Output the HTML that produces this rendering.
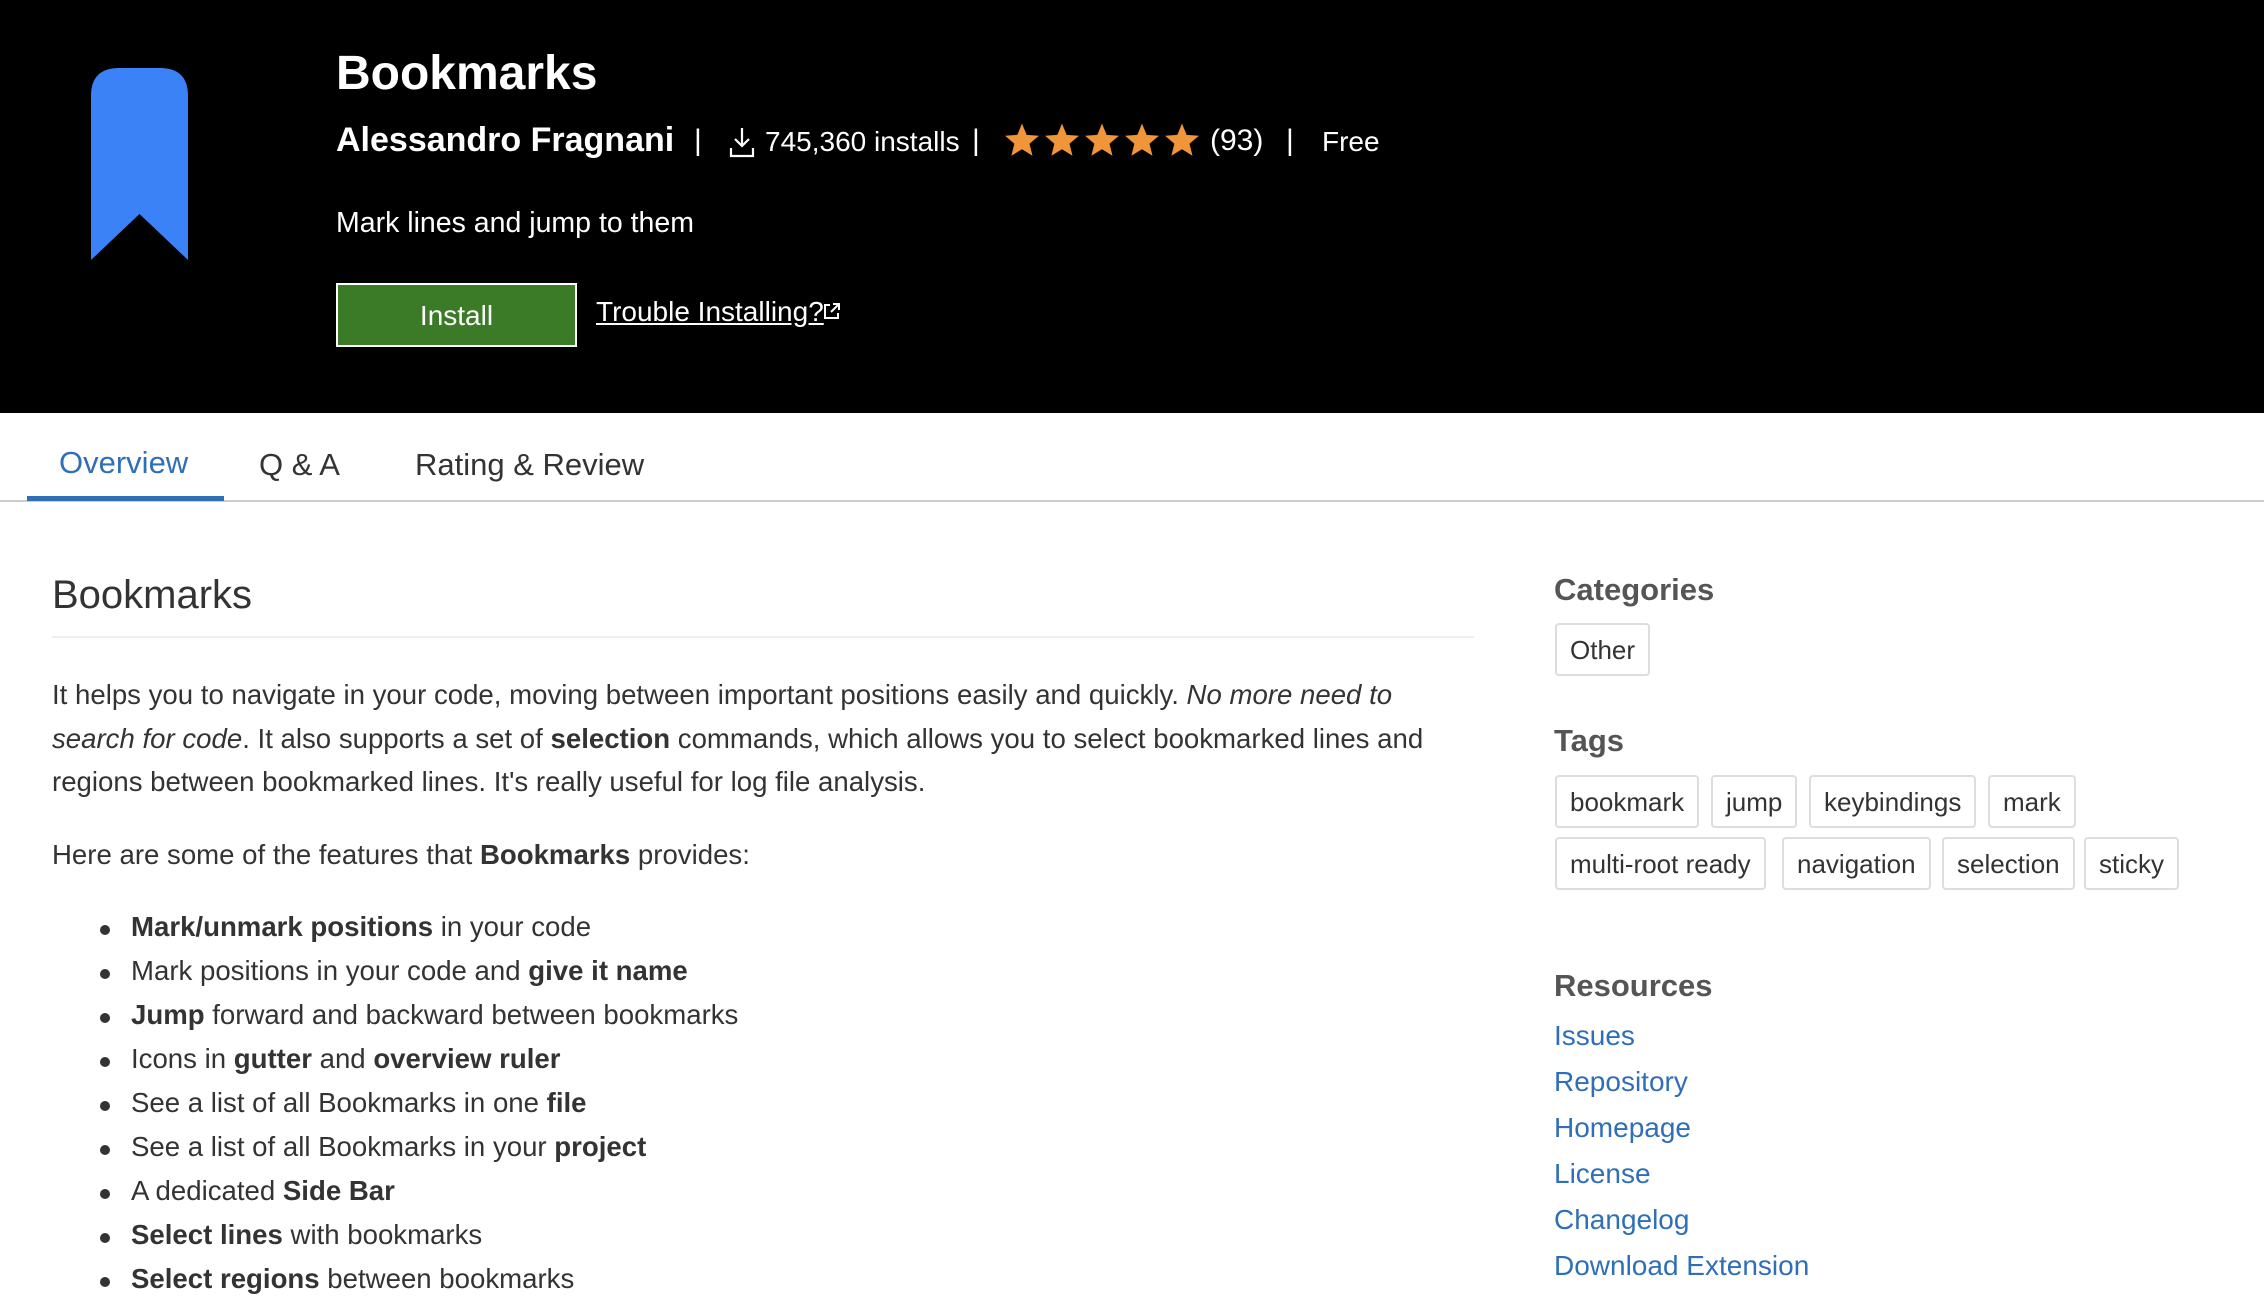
<!DOCTYPE html>
<html><head><meta charset="utf-8"><style>
*{margin:0;padding:0;box-sizing:border-box}
body{width:2264px;height:1313px;overflow:hidden;background:#fff;font-family:"Liberation Sans",sans-serif;position:relative;color:#333}
.a{position:absolute;white-space:nowrap}
#hdr{position:absolute;left:0;top:0;width:2264px;height:413px;background:#000;color:#fff}
.star{display:inline-block;width:36px;height:36px;vertical-align:-5px;margin-right:4px}
.tag{position:absolute;height:53px;border:2px solid #ddd;border-radius:4px;font-size:26px;line-height:51px;padding:0 13px;color:#333;white-space:nowrap}
.lk{position:absolute;left:1554px;font-size:28px;color:#2f6fb8;white-space:nowrap}
.p{position:absolute;left:52px;font-size:27.6px;color:#333;white-space:nowrap}
.li{position:absolute;left:131px;font-size:27.6px;color:#333;white-space:nowrap}
.li::before{content:"";position:absolute;left:-31px;top:14px;width:10px;height:10px;border-radius:50%;background:#333}
b{font-weight:bold}
</style></head><body>
<div id="hdr">
<svg class="a" style="left:91px;top:68px" width="97" height="192" viewBox="0 0 97 192"><path d="M0 28 Q0 0 28 0 L69 0 Q97 0 97 28 L97 192 L48.5 146 L0 192 Z" fill="#3b82f6"/></svg>
<div class="a" style="left:336px;top:46px;font-size:48px;font-weight:bold">Bookmarks</div>
<div class="a" style="left:336px;top:121px;font-size:34px;font-weight:bold">Alessandro Fragnani</div>
<div class="a" style="left:694px;top:124px;font-size:30px">|</div>
<svg class="a" style="left:728px;top:126px" width="28" height="32" viewBox="0 0 28 32"><path d="M14 2 V20 M7 13 L14 20 L21 13 M3 22 V30 H25 V22" stroke="#fff" stroke-width="2.2" fill="none"/></svg>
<div class="a" style="left:765px;top:126px;font-size:28px">745,360 installs</div>
<div class="a" style="left:972px;top:124px;font-size:30px">|</div>
<div class="a" style="left:1004px;top:122px">
<svg class="star" viewBox="0 0 24 24"><path d="M12 1l3.1 7.6 8.2.6-6.3 5.3 2 8L12 18.2 4.9 22.5l2-8L.7 9.2l8.2-.6z" fill="#f0953a"/></svg><svg class="star" viewBox="0 0 24 24"><path d="M12 1l3.1 7.6 8.2.6-6.3 5.3 2 8L12 18.2 4.9 22.5l2-8L.7 9.2l8.2-.6z" fill="#f0953a"/></svg><svg class="star" viewBox="0 0 24 24"><path d="M12 1l3.1 7.6 8.2.6-6.3 5.3 2 8L12 18.2 4.9 22.5l2-8L.7 9.2l8.2-.6z" fill="#f0953a"/></svg><svg class="star" viewBox="0 0 24 24"><path d="M12 1l3.1 7.6 8.2.6-6.3 5.3 2 8L12 18.2 4.9 22.5l2-8L.7 9.2l8.2-.6z" fill="#f0953a"/></svg><svg class="star" viewBox="0 0 24 24"><path d="M12 1l3.1 7.6 8.2.6-6.3 5.3 2 8L12 18.2 4.9 22.5l2-8L.7 9.2l8.2-.6z" fill="#f0953a"/></svg>
</div>
<div class="a" style="left:1210px;top:124px;font-size:30px">(93)</div>
<div class="a" style="left:1286px;top:124px;font-size:30px">|</div>
<div class="a" style="left:1322px;top:126px;font-size:28px">Free</div>
<div class="a" style="left:336px;top:207px;font-size:28.5px">Mark lines and jump to them</div>
<div class="a" style="left:336px;top:283px;width:241px;height:64px;background:#3b7b27;border:2px solid #fff;color:#fff;font-size:28px;text-align:center;line-height:62px">Install</div>
<div class="a" style="left:596px;top:296px;font-size:28px;text-decoration:underline">Trouble Installing?</div>
<svg class="a" style="left:823px;top:302px" width="18" height="18" viewBox="0 0 18 18"><path d="M7 3H2V16H15V11 M10 2H16V8 M16 2L8 10" stroke="#fff" stroke-width="2" fill="none"/></svg>
</div>
<div class="a" style="left:59px;top:445px;font-size:31px;color:#2f6fb8">Overview</div>
<div class="a" style="left:259px;top:447px;font-size:31px;color:#333">Q &amp; A</div>
<div class="a" style="left:415px;top:447px;font-size:31px;color:#333">Rating &amp; Review</div>
<div class="a" style="left:0;top:500px;width:2264px;height:2px;background:#ccc"></div>
<div class="a" style="left:27px;top:496px;width:197px;height:5px;background:#2f6fb8"></div>
<div class="a" style="left:52px;top:573px;font-size:40px;color:#333">Bookmarks</div>
<div class="a" style="left:52px;top:636px;width:1422px;height:2px;background:#eee"></div>
<div class="p" style="top:679px">It helps you to navigate in your code, moving between important positions easily and quickly. <i>No more need to</i></div>
<div class="p" style="top:723px"><i>search for code</i>. It also supports a set of <b>selection</b> commands, which allows you to select bookmarked lines and</div>
<div class="p" style="top:766px">regions between bookmarked lines. It's really useful for log file analysis.</div>
<div class="p" style="top:839px">Here are some of the features that <b>Bookmarks</b> provides:</div>
<div class="li" style="top:911px"><b>Mark/unmark positions</b> in your code</div>
<div class="li" style="top:955px">Mark positions in your code and <b>give it name</b></div>
<div class="li" style="top:999px"><b>Jump</b> forward and backward between bookmarks</div>
<div class="li" style="top:1043px">Icons in <b>gutter</b> and <b>overview ruler</b></div>
<div class="li" style="top:1087px">See a list of all Bookmarks in one <b>file</b></div>
<div class="li" style="top:1131px">See a list of all Bookmarks in your <b>project</b></div>
<div class="li" style="top:1175px">A dedicated <b>Side Bar</b></div>
<div class="li" style="top:1219px"><b>Select lines</b> with bookmarks</div>
<div class="li" style="top:1263px"><b>Select regions</b> between bookmarks</div>
<div class="a" style="left:1554px;top:572px;font-size:31px;font-weight:bold;color:#555">Categories</div>
<div class="tag" style="left:1555px;top:623px">Other</div>
<div class="a" style="left:1554px;top:723px;font-size:31px;font-weight:bold;color:#555">Tags</div>
<div class="tag" style="left:1555px;top:775px">bookmark</div>
<div class="tag" style="left:1711px;top:775px">jump</div>
<div class="tag" style="left:1809px;top:775px">keybindings</div>
<div class="tag" style="left:1988px;top:775px">mark</div>
<div class="tag" style="left:1555px;top:837px">multi-root ready</div>
<div class="tag" style="left:1782px;top:837px">navigation</div>
<div class="tag" style="left:1942px;top:837px">selection</div>
<div class="tag" style="left:2084px;top:837px">sticky</div>
<div class="a" style="left:1554px;top:968px;font-size:31px;font-weight:bold;color:#555">Resources</div>
<div class="lk" style="top:1020px">Issues</div>
<div class="lk" style="top:1066px">Repository</div>
<div class="lk" style="top:1112px">Homepage</div>
<div class="lk" style="top:1158px">License</div>
<div class="lk" style="top:1204px">Changelog</div>
<div class="lk" style="top:1250px">Download Extension</div>
</body></html>
